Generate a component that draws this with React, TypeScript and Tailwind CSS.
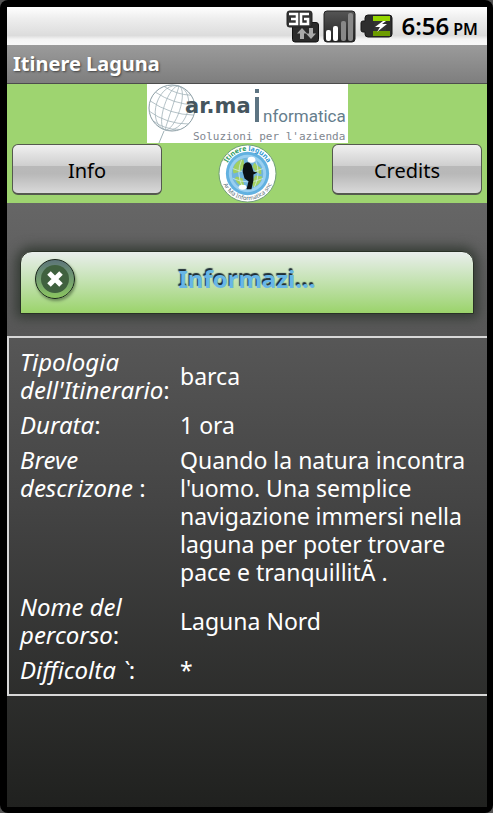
import React from "react";

function NetworkIcon() {
  return (
    <svg width="33" height="33" viewBox="0 0 33 33" aria-label="3G" role="img">
      <rect x="6.5" y="12.500" width="26" height="19.500" rx="2.500" fill="#2b2b2b" stroke="#111" />
      <rect x="1" y="1" width="25" height="16" rx="2.500" fill="#333" stroke="#222" />
      <path
        d="M3 4h8v10H3M5 9h6M23 4h-8v10h7V9h-4"
        fill="none"
        stroke="#fff"
        strokeWidth="2.600"
      />
      <path d="M16 18l5 5.500h-3V29h-4v-5.500h-3zM25 29l-5-5.500h3V18h4v5.500h3z" fill="#aaa" />
    </svg>
  );
}

function SignalIcon() {
  return (
    <svg width="33" height="33" viewBox="0 0 33 33" aria-label="Signal" role="img">
      <defs>
        <linearGradient id="signal" x2="0" y2="1">
          <stop offset="0" stopColor="#555" />
          <stop offset="1" stopColor="#222" />
        </linearGradient>
      </defs>
      <rect x="1" y="1" width="31" height="31" rx="3" fill="url(#signal)" stroke="#222" />
      <rect x="3" y="20" width="5" height="11" rx="2" fill="#fff" />
      <rect x="10" y="16" width="5" height="15" rx="2" fill="#fff" />
      <rect x="18" y="11" width="5" height="20" rx="2" fill="#888" />
      <rect x="25" y="3" width="5" height="28" rx="2" fill="#888" />
    </svg>
  );
}

function BatteryIcon() {
  return (
    <svg width="33" height="24" viewBox="0 0 33 24" aria-label="Battery charging" role="img">
      <path
        d="M8 1h21a3 3 0 0 1 3 3v16a3 3 0 0 1-3 3H8a3 3 0 0 1-3-3v-2H3a2 2 0 0 1-2-2V9a2 2 0 0 1 2-2h2V4a3 3 0 0 1 3-3z"
        fill="#2e2e2e"
        stroke="#161616"
      />
      <path d="M13 2h17v5H13z" fill="#95d600" />
      <path d="M13 17h17v5H13z" fill="#6d9c00" />
      <path d="M14 7h12v10H14z" fill="#333" />
      <path d="M23 7l-8 6h5l-3 5 10-8h-5l4-3z" fill="#fff" />
    </svg>
  );
}

function CompanyLogo() {
  return (
    <svg width="201" height="59" viewBox="0 0 201 59" className="bg-white" role="img" aria-label="ar.ma informatica">
      <g fill="none" stroke="#9fb0b6" strokeWidth="1">
        <ellipse cx="25" cy="24" rx="23" ry="23" stroke="#8b9da4" />
        <g transform="rotate(18 25 24)" strokeWidth="0.700">
          <ellipse cx="25" cy="24" rx="8" ry="23" />
          <ellipse cx="25" cy="24" rx="16" ry="23" />
          <path d="M25 1v46M2 24q23 7 46 0M4 14q21 6 42 0M4 34q21 7 42 0M11 6q14 4 28 0M11 42q14 5 28 0" />
        </g>
        <path d="M17 47l-5 12" />
      </g>
      <text x="38" y="29" fontSize="21" fontWeight="700" fill="#45555e" className="font-['DejaVu_Sans',sans-serif]">
        ar.ma
      </text>
      <path d="M108 13h4v25h-4zM108 5h4v4h-4z" fill="#5d7482" />
      <text x="116" y="38" fontSize="17" fill="#657d8c" className="font-[Roboto,sans-serif]">
        nformatica
      </text>
      <text x="46" y="56" fontSize="11" fill="#7f8790" className="font-['DejaVu_Sans_Mono',monospace]">
        Soluzioni per l'azienda
      </text>
    </svg>
  );
}

function LagunaBadge() {
  return (
    <svg width="59" height="59" viewBox="0 0 60 60" role="img" aria-label="Itinere laguna">
      <defs>
        <path id="arcTop" d="M7 30a23 23 0 0 1 46 0" />
        <path id="arcBottom" d="M3 30a27 27 0 0 0 54 0" />
      </defs>
      <circle cx="30" cy="30" r="29" fill="#fff" stroke="#6f9b78" strokeWidth="1" />
      <circle cx="30" cy="30" r="22" fill="#62b1e0" />
      <circle cx="30" cy="30" r="19" fill="#99cff0" />
      <circle cx="30" cy="30" r="16" fill="#71b5dc" />
      <path
        d="M17 21q5-6 9-5l1 7-4 5-7 2q-2-4 1-9zM19 33l6 2 2 9q-7-2-10-9zM37 19l7 6v6l-6-3-3-5zM38 32l7 1q-1 8-9 11l-2-5z"
        fill="#a2cf60"
      />
      <path d="M15 25q15 7 31 0M15 35q15 7 31 0M24 16q-6 14 1 28M38 16q6 14-1 28" fill="none" stroke="#d6edf7" strokeWidth="0.700" />
      <ellipse cx="34" cy="16" rx="4" ry="3" fill="#fff" />
      <ellipse cx="25" cy="44" rx="4" ry="2.500" fill="#fff" />
      <path d="M26 21q4-5 8 0l2 7 4 1-4 2v6l-2 9h-5l2-8-4-3-2-7z" fill="#0b1115" />
      <text fontSize="7" fontWeight="700" fill="#2e9b62" className="font-['Noto_Sans',sans-serif]">
        <textPath href="#arcTop" startOffset="50%" textAnchor="middle">
          Itinere <tspan fill="#2f96d2">laguna</tspan>
        </textPath>
      </text>
      <text fontSize="6" fill="#53666e" className="font-['Noto_Sans',sans-serif]">
        <textPath href="#arcBottom" startOffset="50%" textAnchor="middle">
          Ar Ma Informatica snc
        </textPath>
      </text>
    </svg>
  );
}

function HeaderButton({ children }: { children: React.ReactNode }) {
  return (
    <button
      type="button"
      className="h-[51px] w-[150px] rounded-md border border-b-2 border-[#55594f] bg-[linear-gradient(#f0f0f0,#cfcfcf_43%,#b9b9b9_44%,#b8b8b8_60%,#d9d9d9)] pt-1 text-xl text-black"
    >
      {children}
    </button>
  );
}

const details = [
  { label: "Tipologia dell'Itinerario", end: ":", value: "barca" },
  { label: "Durata", end: ":", value: "1 ora" },
  {
    label: "Breve descrizone",
    end: " :",
    value:
      "Quando la natura incontra l'uomo. Una semplice navigazione immersi nella laguna per poter trovare pace e tranquillitÃ .",
  },
  { label: "Nome del percorso", end: ":", value: "Laguna Nord" },
  { label: "Difficolta `", end: ":", value: "*" },
];

export default function App() {
  return (
    <div className="min-h-screen bg-[#555] font-['Noto_Sans','Open_Sans',sans-serif]">
      <div className="flex min-h-screen flex-col rounded-lg bg-black pt-[7px] pr-[6px] pb-[6px] pl-[7px]">
        <div className="flex h-[38px] items-center justify-end gap-1 bg-[linear-gradient(#fff,#eee_30%,#dcdcdc_75%,#f4f4f4_85%,#f8f8f8)] pr-[9px]">
          <NetworkIcon />
          <SignalIcon />
          <BatteryIcon />
          <time className="flex items-baseline gap-1 pl-1 text-2xl font-semibold text-black">
            6:56 <span className="text-base">PM</span>
          </time>
        </div>
        <div className="flex h-[39px] items-center border-b border-[#4c4c4c] bg-linear-to-b from-[#9b9b9b] to-[#7e7e7e] px-[6px]">
          <h1 className="text-xl font-bold text-white [text-shadow:1px_1px_2px_#444]">Itinere Laguna</h1>
        </div>

        <header className="bg-[#9ed470]">
          <div className="flex justify-center">
            <CompanyLogo />
          </div>
          <div className="flex items-start justify-between px-[5px] pt-px">
            <HeaderButton>Info</HeaderButton>
            <LagunaBadge />
            <HeaderButton>Credits</HeaderButton>
          </div>
        </header>

        <main className="flex-1 bg-linear-to-b from-[#666] via-[#444] to-[#20211f] pt-12 text-white">
          <div className="mx-[13px] grid h-[63px] grid-cols-[40px_1fr_40px] items-center rounded-t-xl border border-[#293126] bg-linear-to-b from-[#e9eeec] to-[#9bd36a] px-[14px] pb-2 shadow-[0_0_12px_4px_#343b34]">
            <button
              type="button"
              aria-label="Chiudi"
              className="flex size-[40px] items-center justify-center rounded-full border border-[#18251a] bg-linear-to-b from-[#5c7478] to-[#8bc65e] shadow-[1px_2px_3px_#6b8b58]"
            >
              <span className="flex size-[28px] items-center justify-center rounded-full bg-[#40613f]">
                <svg width="18" height="18" viewBox="0 0 18 18" stroke="#fff" strokeWidth="5">
                  <path d="M3 3l12 12M15 3L3 15" />
                </svg>
              </span>
            </button>
            <h2 className="text-center text-2xl font-bold text-[#68b6e6] [text-shadow:-1px_-2px_1px_#1c2b35]">
              Informazi...
            </h2>
          </div>

          <table className="mt-[22px] w-full border-separate border-spacing-[7px] border-2 border-r-0 border-[#d8d8d8] px-1 py-[3px] text-left text-2xl/[28px]">
            <tbody>
              {details.map((row) => (
                <tr key={row.label}>
                  <th scope="row" className="w-[153px] p-0 align-top font-normal">
                    <i>{row.label}</i>
                    {row.end}
                  </th>
                  <td className="p-0 text-[23px]/[28px]">{row.value}</td>
                </tr>
              ))}
            </tbody>
          </table>
        </main>
      </div>
    </div>
  );
}
